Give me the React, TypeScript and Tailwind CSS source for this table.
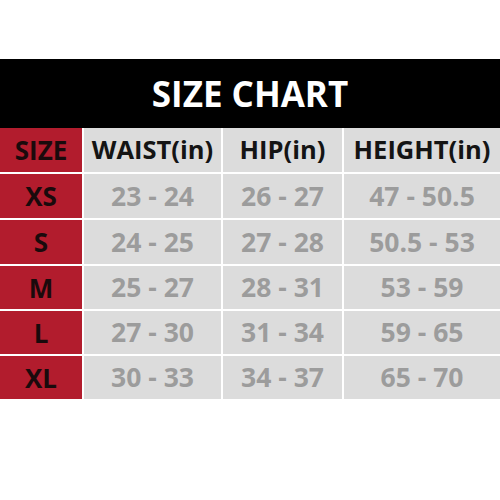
import React from "react";

const rows = [
  ["XS", "23 - 24", "26 - 27", "47 - 50.5"],
  ["S", "24 - 25", "27 - 28", "50.5 - 53"],
  ["M", "25 - 27", "28 - 31", "53 - 59"],
  ["L", "27 - 30", "31 - 34", "59 - 65"],
  ["XL", "30 - 33", "34 - 37", "65 - 70"],
];

export default function App() {
  return (
    <div
      className="w-[500px] h-[500px] bg-white flex flex-col"
      style={{ fontFamily: '"Open Sans", "Noto Sans", sans-serif' }}
    >
      <div className="h-[59px]" />
      <div className="h-[69px] bg-black flex items-center justify-center">
        <span className="text-white font-bold text-[35px] leading-none">SIZE CHART</span>
      </div>
      <div className="grid grid-cols-[82px_137px_119px_1fr] gap-x-[2px] gap-y-[2px] bg-white">
        <div className="h-[44px] bg-[#b21c2d] flex items-center justify-center text-[#1a0a0c] font-bold text-[26px] leading-none">
          SIZE
        </div>
        <div className="h-[44px] bg-[#dcdcdc] flex items-center justify-center text-[#141414] font-bold text-[25.5px] leading-none">
          WAIST(in)
        </div>
        <div className="h-[44px] bg-[#dcdcdc] flex items-center justify-center text-[#141414] font-bold text-[25.5px] leading-none">
          HIP(in)
        </div>
        <div className="h-[44px] bg-[#dcdcdc] flex items-center justify-center text-[#141414] font-bold text-[25.5px] leading-none">
          HEIGHT(in)
        </div>
        {rows.map((r, i) => (
          <React.Fragment key={r[0]}>
            <div
              className={`${i < 2 ? "h-[44px]" : "h-[43px]"} bg-[#b21c2d] flex items-center justify-center text-[#1a0a0c] font-bold text-[26px] leading-none`}
            >
              {r[0]}
            </div>
            {r.slice(1).map((v, j) => (
              <div
                key={j}
                className={`${i < 2 ? "h-[44px]" : "h-[43px]"} bg-[#dcdcdc] flex items-center justify-center text-[#9c9c9c] font-bold text-[26.5px] leading-none`}
              >
                {v}
              </div>
            ))}
          </React.Fragment>
        ))}
      </div>
    </div>
  );
}
